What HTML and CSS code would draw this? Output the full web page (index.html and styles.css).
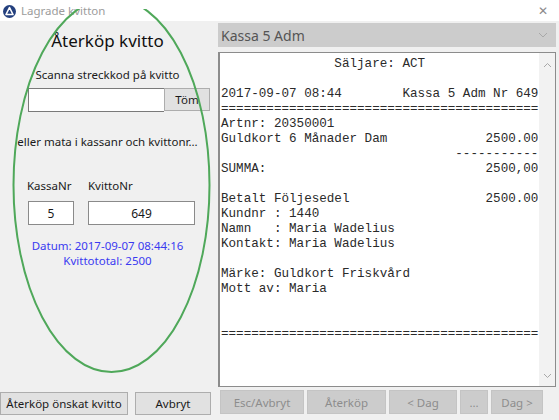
FILE: index.html
```html
<!DOCTYPE html>
<html lang="sv">
<head>
    <meta charset="UTF-8">
    <title>Lagrade kvitton</title>
    <link rel="stylesheet" href="styles.css">
</head>
<body>
    <div class="titlebar">
        <svg class="app-icon" width="13" height="13" viewBox="0 0 13 13">
            <circle cx="6.5" cy="6.5" r="6.5" fill="#24407e"/>
            <path d="M6.5 2.5 L10 9.5 L3 9.5 Z" fill="none" stroke="#fff" stroke-width="1.6" stroke-linejoin="round"/>
        </svg>
        <span class="title">Lagrade kvitton</span>
        <span class="close">&#x2715;</span>
    </div>

    <div class="window">
        <!-- left: pick a receipt -->
        <div class="left">
            <h1>Återköp kvitto</h1>
            <p class="hint">Scanna streckkod på kvitto</p>
            <div class="scan-row">
                <input type="text" class="scan-input">
                <button class="btn btn-clear">Töm</button>
            </div>
            <p class="hint or">eller mata i kassanr och kvittonr...</p>
            <div class="nr-row">
                <label class="nr-field kassa">
                    <span>KassaNr</span>
                    <input type="text" value="5">
                </label>
                <label class="nr-field kvitto">
                    <span>KvittoNr</span>
                    <input type="text" value="649">
                </label>
            </div>
            <div class="info">
                <div>Datum: 2017-09-07 08:44:16</div>
                <div>Kvittototal: 2500</div>
            </div>
            <div class="actions">
                <button class="btn btn-return">Återköp önskat kvitto</button>
                <button class="btn btn-cancel">Avbryt</button>
            </div>
        </div>

        <!-- right: receipt preview -->
        <div class="right">
            <div class="select">
                <span>Kassa 5 Adm</span>
                <svg width="10" height="6" viewBox="0 0 10 6"><path d="M1 1 L5 5 L9 1" fill="none" stroke="#a8a8a8" stroke-width="1"/></svg>
            </div>
            <div class="receipt">
<pre>               Säljare: ACT

2017-09-07 08:44        Kassa 5 Adm Nr 649
==========================================
Artnr: 20350001
Guldkort 6 Månader Dam             2500.00
                               -----------
SUMMA:                             2500,00

Betalt Följesedel                  2500.00
Kundnr : 1440
Namn   : Maria Wadelius
Kontakt: Maria Wadelius

Märke: Guldkort Friskvård
Mott av: Maria


==========================================</pre>
                <div class="scrollbar">
                    <svg width="9" height="6" viewBox="0 0 9 6"><path d="M1 5 L4.5 1.5 L8 5" fill="none" stroke="#a8a8a8" stroke-width="1"/></svg>
                    <svg width="9" height="6" viewBox="0 0 9 6"><path d="M1 1 L4.5 4.5 L8 1" fill="none" stroke="#a8a8a8" stroke-width="1"/></svg>
                </div>
            </div>
            <div class="nav">
                <button class="nav-btn w-esc">Esc/Avbryt</button>
                <button class="nav-btn w-ret">Återköp</button>
                <button class="nav-btn w-prev">&lt; Dag</button>
                <button class="nav-btn w-more">...</button>
                <button class="nav-btn w-next">Dag &gt;</button>
            </div>
        </div>

        <svg class="ring" width="215" height="400" viewBox="0 0 215 400">
            <ellipse cx="111.5" cy="176" rx="98" ry="187" fill="none" stroke="#4fa85a" stroke-width="2"/>
        </svg>
    </div>
</body>
</html>
```

FILE: styles.css
```css
body {
    margin: 0;
    width: 559px;
    height: 420px;
    background-color: #f0f0f0;
    font-family: "Noto Sans", "Open Sans", sans-serif;
    color: #1a1a1a;
    overflow: hidden;
}

.titlebar {
    height: 21px;
    background-color: #fff;
    display: flex;
    align-items: center;
    padding-left: 3px;
}

.app-icon {
    margin-top: 1px;
}

.title {
    margin-left: 5px;
    font-size: 11.5px;
    color: #9c9c9c;
}

.close {
    margin-left: auto;
    margin-right: 11px;
    font-size: 12px;
    color: #8a8a8a;
}

.window {
    position: relative;
    display: flex;
    height: 399px;
}

/* left panel */
.left {
    width: 215px;
    display: flex;
    flex-direction: column;
    align-items: center;
}

.left h1 {
    margin: 9px 0 0;
    font-size: 17px;
    line-height: 22px;
    font-weight: normal;
    color: #111;
}

.hint {
    margin: 15px 0 0;
    font-size: 11.5px;
    line-height: 16px;
}

.hint.or {
    margin-top: 22px;
}

.scan-row {
    align-self: flex-start;
    margin: 5px 0 0 28px;
    display: flex;
}

.scan-input {
    width: 136px;
    height: 24px;
    box-sizing: border-box;
    border: 1px solid #7a7a7a;
    border-right: none;
    background: #fff;
    margin: 0;
}

.btn {
    background-color: #e1e1e1;
    border: 1px solid #adadad;
    font-family: inherit;
    font-size: 11.5px;
    color: #1a1a1a;
    padding: 0;
    box-sizing: border-box;
}

.btn-clear {
    width: 46px;
    height: 23px;
}

.nr-row {
    align-self: flex-start;
    margin: 28px 0 0 27px;
    display: flex;
    gap: 14px;
}

.nr-field {
    display: flex;
    flex-direction: column;
    font-size: 11.5px;
    line-height: 16px;
}

.nr-field input {
    margin: 7px 0 0 1px;
    height: 24px;
    box-sizing: border-box;
    border: 1px solid #8a8a8a;
    background: #fff;
    text-align: center;
    font-family: inherit;
    font-size: 12px;
    color: #1a1a1a;
}

.kassa input {
    width: 46px;
}

.kvitto input {
    width: 107px;
    margin-left: 0;
}

.info {
    margin-top: 13px;
    text-align: center;
    font-size: 11.5px;
    line-height: 15px;
    color: #3a3af0;
}

.actions {
    margin-top: auto;
    margin-bottom: 5px;
    align-self: stretch;
    display: flex;
    gap: 7px;
}

.btn-return {
    width: 128px;
    height: 23px;
}

.btn-cancel {
    width: 76px;
    height: 23px;
}

/* right panel */
.right {
    width: 338px;
    margin-left: 3px;
    display: flex;
    flex-direction: column;
}

.select {
    margin-top: 2px;
    height: 24px;
    background-color: #cccccc;
    display: flex;
    align-items: center;
    justify-content: space-between;
    padding: 0 8px 0 3px;
    font-size: 14px;
    color: #555;
}

.receipt {
    margin-top: 5px;
    height: 335px;
    box-sizing: border-box;
    background-color: #fff;
    border: 1px solid #8c8c8c;
    border-left-width: 2px;
    display: flex;
}

.receipt pre {
    flex: 1;
    margin: 0;
    padding: 4px 0 0 1px;
    font-family: "Liberation Mono", monospace;
    font-size: 12.6px;
    line-height: 15px;
    color: #2a2a2a;
}

.scrollbar {
    width: 16px;
    background-color: #f2f2f2;
    display: flex;
    flex-direction: column;
    justify-content: space-between;
    align-items: center;
    padding: 9px 0 7px;
}

.nav {
    margin-top: 3px;
    padding-left: 2px;
    display: flex;
    gap: 3px;
}

.nav-btn {
    height: 24px;
    background-color: #cccccc;
    border: 1px solid #c4c4c4;
    font-family: inherit;
    font-size: 11.5px;
    color: #8c8c8c;
    padding: 0;
}

.w-esc { width: 84px; }
.w-ret { width: 79px; }
.w-prev { width: 68px; }
.w-more { width: 28px; }
.w-next { width: 52px; }

/* hand-drawn highlight ring over the left panel */
.ring {
    position: absolute;
    left: 0;
    top: -12px;
    pointer-events: none;
}
```
